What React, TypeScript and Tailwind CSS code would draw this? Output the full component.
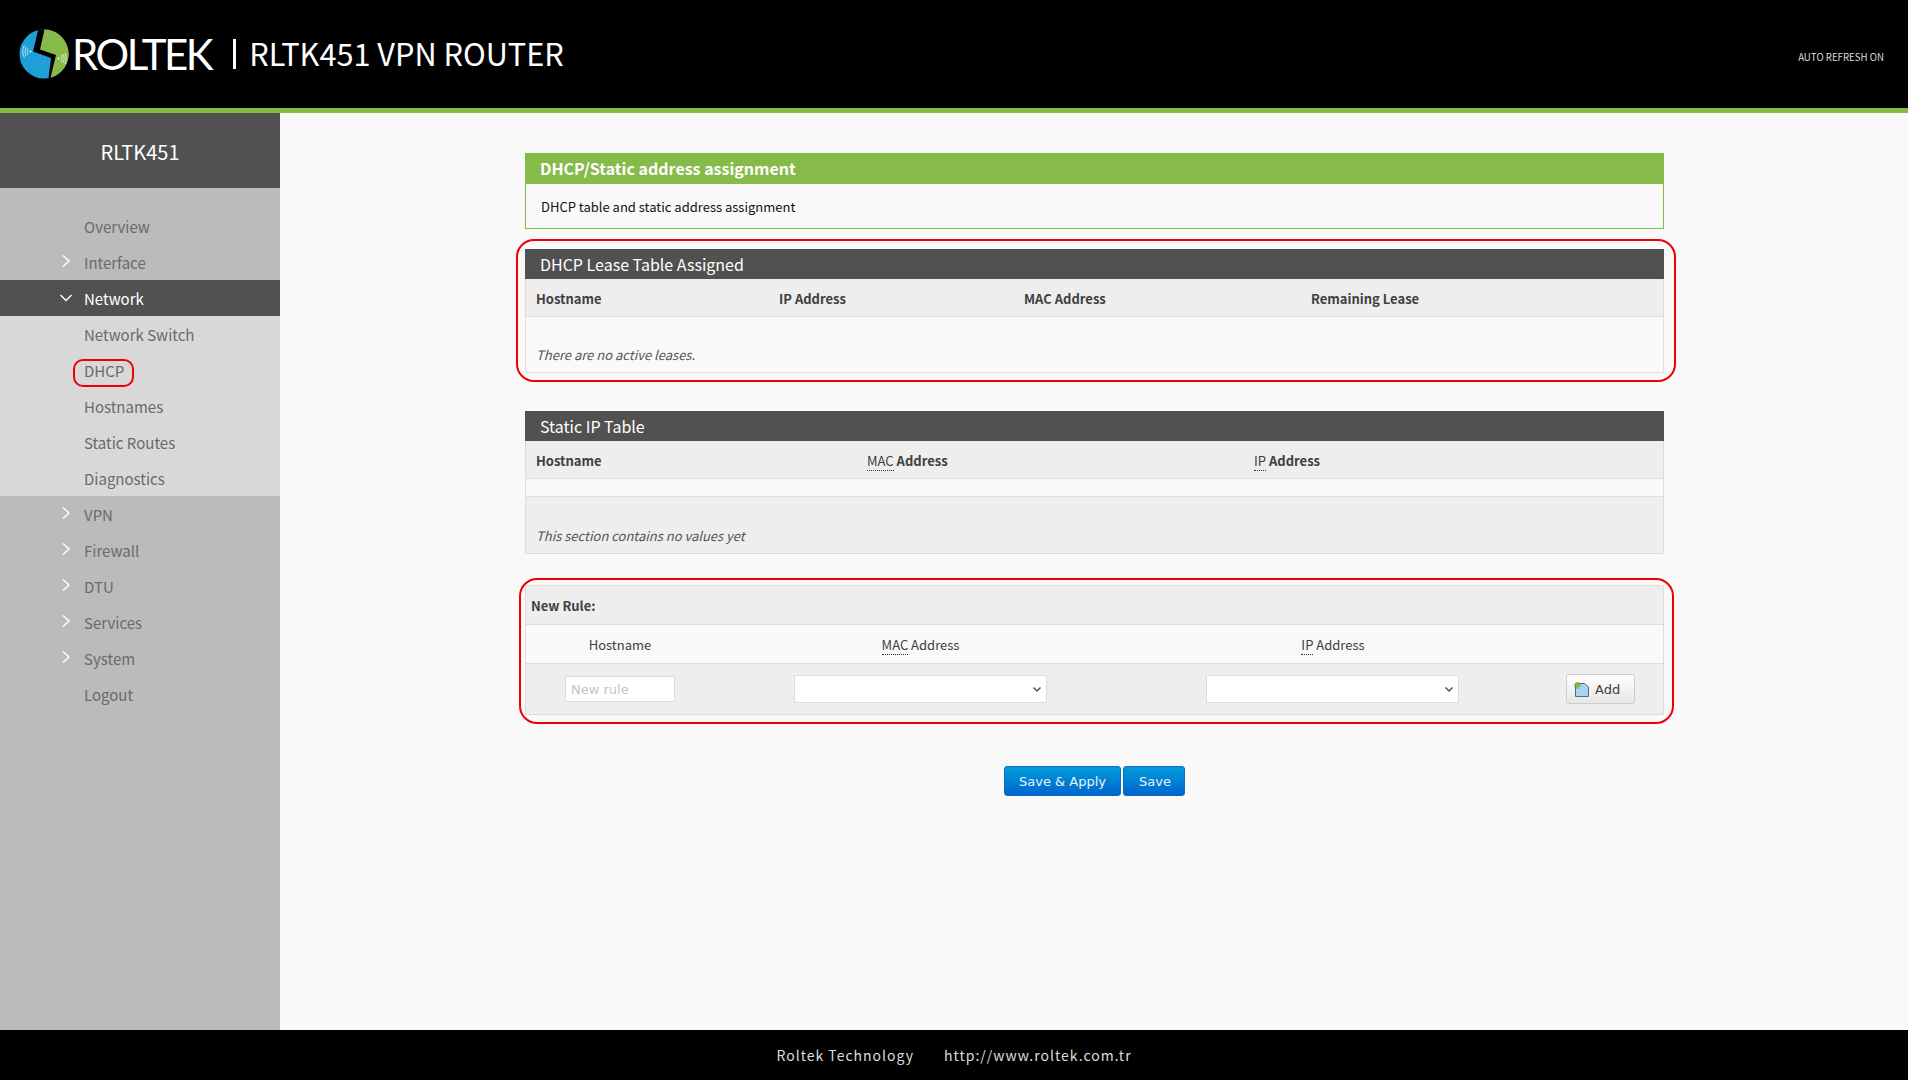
const cjk = "font-['Noto_Sans_CJK_SC','Noto_Sans',sans-serif]";

function Logo() {
  return (
    <svg width="50" height="50" viewBox="0 0 50 50" className="shrink-0">
      <circle cx="25" cy="25" r="24.5" fill="#1f9fd8" />
      <path d="M25 0.5A24.5 24.5 0 0 1 32 48.5L36 27L20 21Z" fill="#86bb4a" />
      <path d="M19 1.2L25.5 0.6L21 20.5L37 26L31.5 48.8L29.5 49L32 29L14 22.5Z" fill="#000" />
      <g fill="none" stroke="#fff" strokeWidth="0.7">
        <path d="M9 19.5a6 6 0 0 0 0 6M7.2 18a9 9 0 0 0 0 9M5.4 16.5a12 12 0 0 0 0 12" />
        <path d="M42 26a6 6 0 0 1 0 7M44 25a9 9 0 0 1 0 9M46 24a12 12 0 0 1 0 11" />
      </g>
      <circle cx="11.5" cy="22.5" r="1" fill="#fff" />
      <circle cx="39.5" cy="29.5" r="1" fill="#fff" />
    </svg>
  );
}

function Chevron({ open }: { open?: boolean }) {
  return (
    <svg width="12" height="12" viewBox="0 0 12 12" className="absolute left-[60px] top-[11px]" fill="none" stroke="#fff" strokeWidth="1.4">
      <path d={open ? "M0.5 4L6 9.5L11.5 4" : "M3 0.5L9 6L3 11.5"} />
    </svg>
  );
}

function NavItem({ label, arrow, open, sub }: { label: string; arrow?: boolean; open?: boolean; sub?: boolean }) {
  return (
    <div className={`relative h-9 pl-[84px] text-[15px] leading-[38px] ${open ? "bg-[#515151] text-white" : "text-[#6a6a6a]"} ${sub ? "bg-[#d8d8d8]" : ""}`}>
      {arrow && <Chevron open={open} />}
      {label}
    </div>
  );
}

function Sidebar() {
  return (
    <aside className="relative w-[280px] shrink-0 bg-[#bbbbbb]">
      <div className="flex h-[75px] items-center justify-center bg-[#515151] pt-[2px] text-[20px] text-white">RLTK451</div>
      <div className="pt-[20px]">
        <NavItem label="Overview" />
        <NavItem label="Interface" arrow />
        <NavItem label="Network" arrow open />
        <NavItem label="Network Switch" sub />
        <NavItem label="DHCP" sub />
        <NavItem label="Hostnames" sub />
        <NavItem label="Static Routes" sub />
        <NavItem label="Diagnostics" sub />
        <NavItem label="VPN" arrow />
        <NavItem label="Firewall" arrow />
        <NavItem label="DTU" arrow />
        <NavItem label="Services" arrow />
        <NavItem label="System" arrow />
        <NavItem label="Logout" />
      </div>
      <div className="absolute left-[73px] top-[246px] h-[28px] w-[61px] rounded-[10px] border-2 border-[#f00000]" />
    </aside>
  );
}

function Abbr({ children }: { children: string }) {
  return <span className="border-b border-dotted border-[#333] font-normal leading-[14px]">{children}</span>;
}

function SectionTitle({ children }: { children: string }) {
  return <div className="h-[30px] bg-[#515151] pl-[15px] text-[16px] leading-[30px] text-white">{children}</div>;
}

function SelectBox() {
  return (
    <div className="relative h-[28px] w-[253px] border border-[#dddddd] bg-white">
      <svg width="10" height="7" viewBox="0 0 10 7" className="absolute right-[4px] top-[10px]" fill="none" stroke="#555" strokeWidth="1.5">
        <path d="M1.5 1.5L5 5L8.5 1.5" />
      </svg>
    </div>
  );
}

function AddIcon() {
  return (
    <svg width="15" height="15" viewBox="0 0 15 15" className="shrink-0">
      <path d="M1.5 1.5H10.5L14.5 5V14.5H1.5Z" fill="#a9d3f2" stroke="#2f4b6e" strokeWidth="0.8" />
      <path d="M0 2.5H2.5V0H4.5V2.5H7V4.5H4.5V7H2.5V4.5H0Z" fill="#7dbb2d" />
    </svg>
  );
}

function Content() {
  return (
    <main className="relative min-w-0 flex-1 bg-[#f9f9f9] pl-[245px] pr-[244px] pt-[40px]">
      <div className="border-[1px] border-[#86bb4a]">
        <div className="h-[30px] bg-[#86bb4a] pl-[14px] text-[16px] font-bold leading-[29px] text-white">DHCP/Static address assignment</div>
        <div className="h-[44px] pl-[15px] text-[13px] leading-[46px] text-[#111]">DHCP table and static address assignment</div>
      </div>

      <section className="mt-[20px]">
        <SectionTitle>DHCP Lease Table Assigned</SectionTitle>
        <div className="border-x border-b border-[#dddddd] text-[13px] text-[#404040]">
          <div className="grid h-[38px] grid-cols-[243px_245px_287px_1fr] items-center border-b border-[#dddddd] bg-[#eeeeee] pl-[10px] pt-[2px] font-bold">
            <div>Hostname</div>
            <div>IP Address</div>
            <div>MAC Address</div>
            <div>Remaining Lease</div>
          </div>
          <div className="h-[55px] pl-[10px] pt-[28px] italic leading-5 text-[#555]">There are no active leases.</div>
        </div>
      </section>

      <section className="mt-[38px]">
        <SectionTitle>Static IP Table</SectionTitle>
        <div className="border-x border-b border-[#dddddd] text-[13px] text-[#404040]">
          <div className="grid h-[38px] grid-cols-[331px_387px_1fr] items-center border-b border-[#dddddd] bg-[#eeeeee] pl-[10px] pt-[2px] font-bold">
            <div>Hostname</div>
            <div><Abbr>MAC</Abbr> Address</div>
            <div><Abbr>IP</Abbr> Address</div>
          </div>
          <div className="h-[18px] border-b border-[#dddddd] bg-[#f9f9f9]" />
          <div className="h-[56px] bg-[#eeeeee] pl-[10px] pt-[29px] italic leading-5 text-[#555]">This section contains no values yet</div>
        </div>
      </section>

      <section className="mt-[31px] border border-[#dddddd] text-[13px] text-[#404040]">
        <div className="h-[39px] border-b border-[#dddddd] bg-[#eeeeee] pl-[5px] font-bold leading-[40px]">New Rule:</div>
        <div className="grid h-[39px] grid-cols-[188px_410px_416px_1fr] items-center border-b border-[#dddddd] bg-[#f9f9f9] pt-[2px] text-center">
          <div>Hostname</div>
          <div className="pl-[3px]"><Abbr>MAC</Abbr> Address</div>
          <div className="pl-[2px]"><Abbr>IP</Abbr> Address</div>
          <div />
        </div>
        <div className="grid h-[50px] grid-cols-[188px_410px_416px_1fr] items-center bg-[#eeeeee]">
          <div className="flex justify-center">
            <input placeholder="New rule" readOnly className="h-[26px] w-[110px] border border-[#dddddd] bg-white pl-[5px] font-['DejaVu_Sans',sans-serif] text-[13px] outline-none placeholder:text-[#c4c4c4]" />
          </div>
          <div className="flex justify-center pl-[2px]"><SelectBox /></div>
          <div className="flex justify-center"><SelectBox /></div>
          <div className="pl-[26px]">
            <button className="flex h-[30px] w-[69px] items-center gap-[6px] rounded-[3px] border border-[#cccccc] bg-gradient-to-b from-[#ffffff] to-[#e6e6e6] pl-[7px] font-['DejaVu_Sans',sans-serif] text-[13px] text-[#404040]">
              <AddIcon />
              <span className="pt-[1px]">Add</span>
            </button>
          </div>
        </div>
      </section>

      <div className="mt-[51px] flex justify-center gap-[2px] font-['DejaVu_Sans',sans-serif] text-[13px] text-[#e8f2fa]">
        <button className="h-[30px] w-[117px] rounded-[3px] border border-[#0a6fc0] bg-gradient-to-b from-[#049cdb] to-[#0064cd] pt-[1px]">Save &amp; Apply</button>
        <button className="h-[30px] w-[62px] rounded-[3px] border border-[#0a6fc0] bg-gradient-to-b from-[#049cdb] to-[#0064cd] pl-[2px] pt-[1px]">Save</button>
      </div>

      <div className="pointer-events-none absolute left-[236px] top-[126px] h-[143px] w-[1160px] rounded-[18px] border-2 border-[#f00000]" />
      <div className="pointer-events-none absolute left-[239px] top-[465px] h-[146px] w-[1155px] rounded-[18px] border-2 border-[#f00000]" />
    </main>
  );
}

export default function App() {
  return (
    <div className={`flex h-[1080px] w-[1908px] flex-col overflow-hidden bg-[#f9f9f9] ${cjk}`}>
      <header className="flex h-[113px] shrink-0 items-center border-b-[5px] border-[#86bb4a] bg-black pl-[19px] text-white">
        <Logo />
        <div className="ml-[3px] font-['Lato',sans-serif] text-[42px] font-normal leading-none tracking-[-2.5px]">ROLTEK</div>
        <div className="ml-[22px] h-[30px] w-[3px] bg-white" />
        <div className="mb-[2px] ml-[13px] text-[30.7px] leading-none">RLTK451 VPN ROUTER</div>
        <div className="ml-auto pr-[24px] pt-[6px] text-[9.7px] text-[#dddddd]">AUTO REFRESH ON</div>
      </header>
      <div className="flex min-h-0 flex-1">
        <Sidebar />
        <Content />
      </div>
      <footer className="flex h-[50px] shrink-0 items-center justify-center gap-[30px] bg-black text-[14px] tracking-[1px] text-[#dddddd]">
        <span>Roltek Technology</span>
        <span>http://www.roltek.com.tr</span>
      </footer>
    </div>
  );
}
